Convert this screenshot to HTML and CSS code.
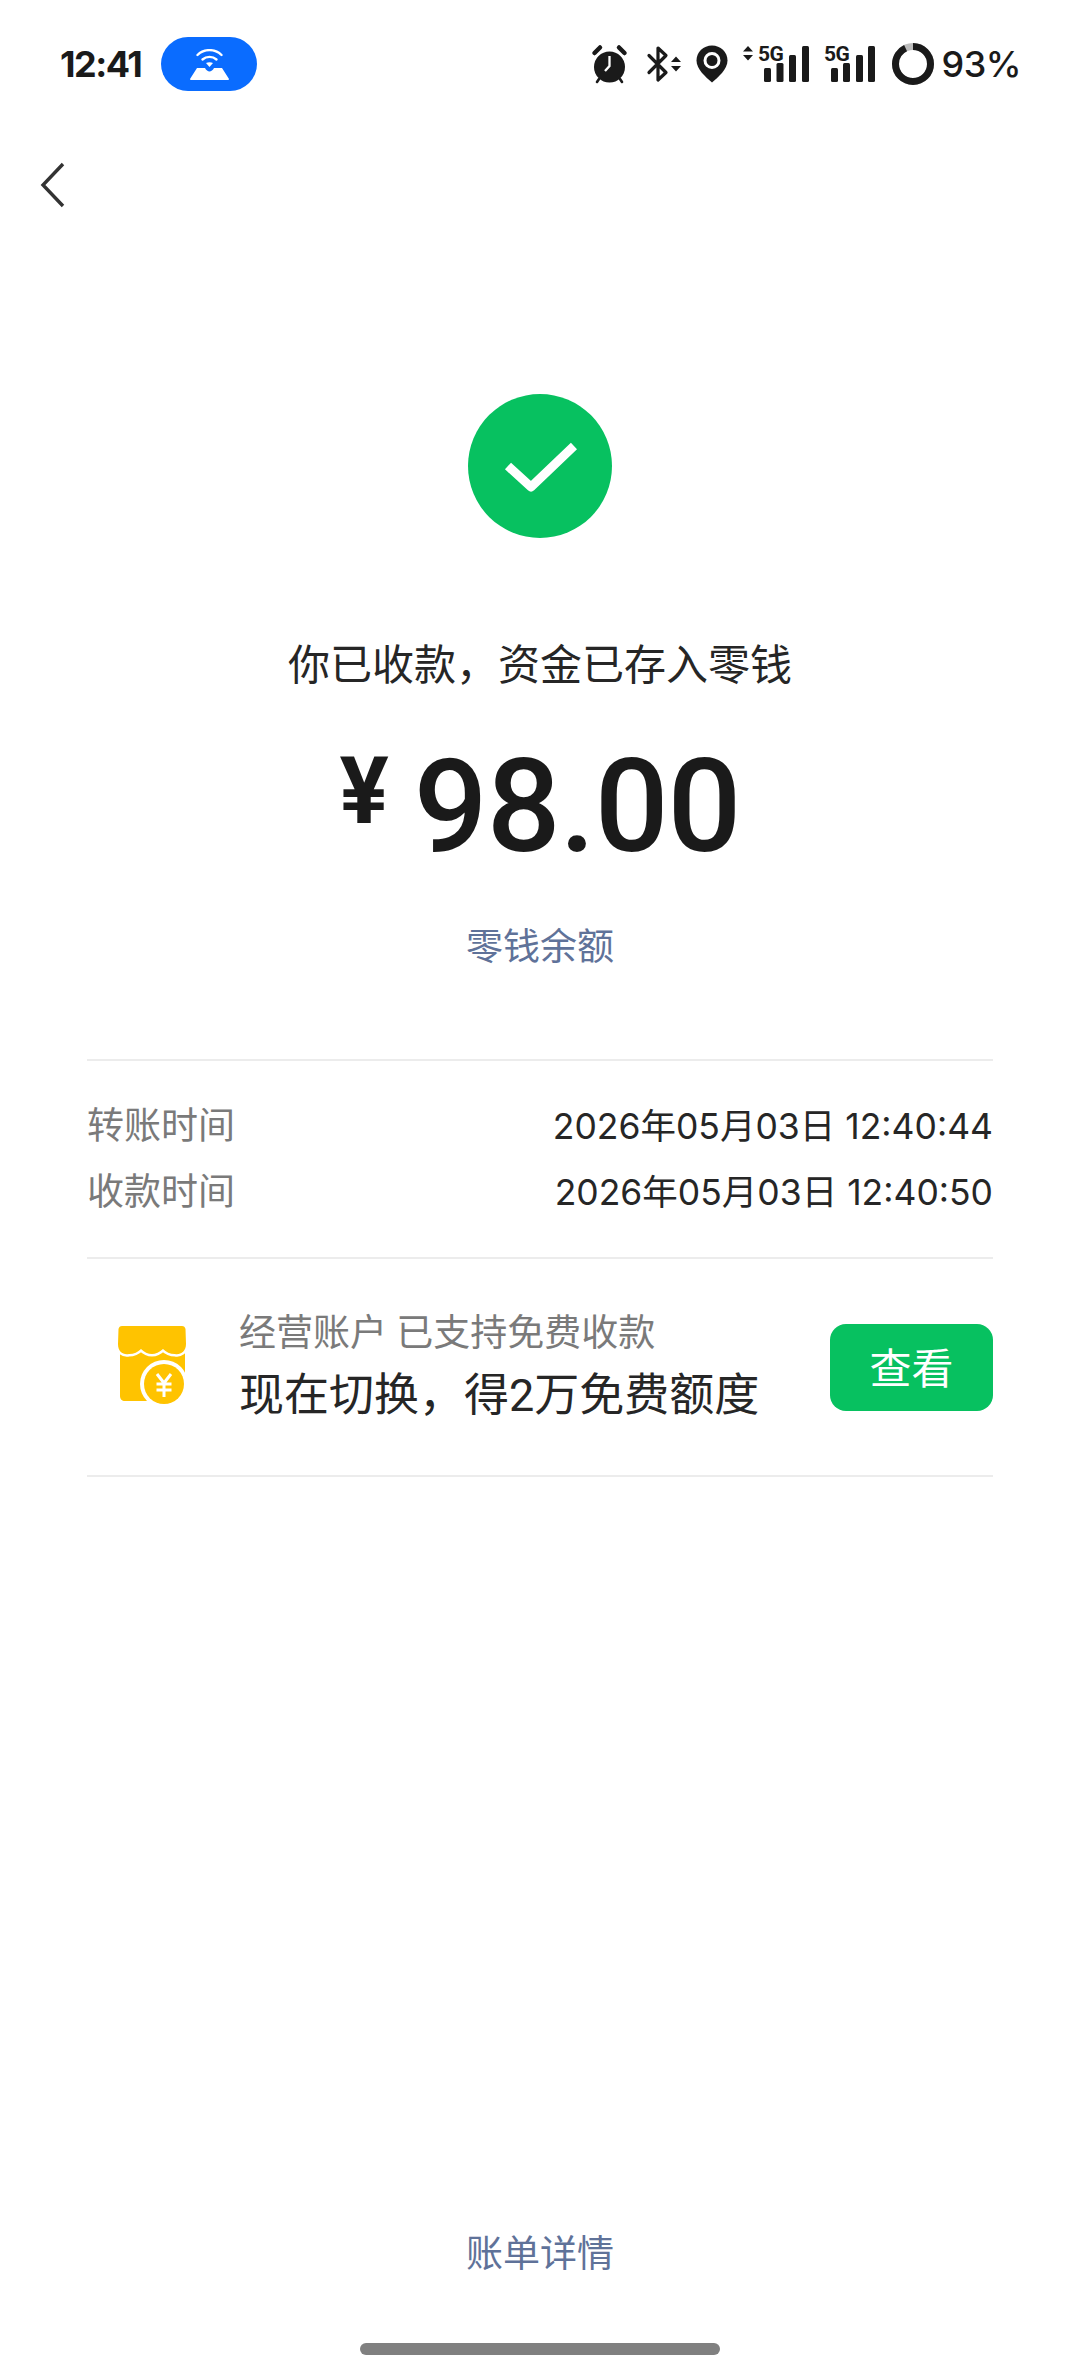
FILE: index.html
```html
<!DOCTYPE html>
<html lang="zh-CN">
<head>
    <meta charset="UTF-8">
    <meta name="viewport" content="width=device-width, initial-scale=1.0">
    <title>收款成功</title>
    <link rel="stylesheet" href="styles.css">
</head>
<body>
    <div class="page">
        <div class="status-bar">
            <div class="status-left">
                <span class="clock">12:41</span>
                <span class="hotspot-pill">
                    <svg width="39" height="31" viewBox="0 0 39 31">
                        <path d="M7.500 6C14 -0.500 25 -0.500 31.500 6" fill="none" stroke="#fff" stroke-width="2.400" stroke-linecap="round"/>
                        <path d="M12.500 10.500C16.500 7 22.500 7 26.500 10.500" fill="none" stroke="#fff" stroke-width="2.400" stroke-linecap="round"/>
                        <path d="M16 14C18 13 21 13 23 14L19.500 18Z" fill="#fff"/>
                        <path d="M7 19H15C16 21 18 22.500 19.500 22.500C21 22.500 23 21 24 19H32L39 30C39 30.500 38.500 31 38 31H1C0.500 31 0 30.500 0 30Z" fill="#fff"/>
                    </svg>
                </span>
            </div>
            <div class="status-right">
                <svg class="icon-alarm" width="35" height="38" viewBox="0 0 35 38">
                    <path d="M2.500 8L8 2.500M32.500 8L27 2.500" fill="none" stroke="#1a1a1a" stroke-width="4.500" stroke-linecap="round"/>
                    <circle cx="17.500" cy="22" r="15.500" fill="#1a1a1a"/>
                    <path d="M7 34L5 37M28 34L30 37" stroke="#1a1a1a" stroke-width="2.600" stroke-linecap="round"/>
                    <path d="M17.500 11V21L13 26" fill="none" stroke="#fff" stroke-width="2.300"/>
                </svg>
                <svg class="icon-bt" width="34" height="38" viewBox="0 0 34 38">
                    <path d="M2 10.500L19 27.500L11 35V3L19 10.500L2 27.500" fill="none" stroke="#1a1a1a" stroke-width="3.200" stroke-linecap="round" stroke-linejoin="round"/>
                    <path d="M24 17L29 11.500L34 17Z M24 21L29 26.500L34 21Z" fill="#1a1a1a"/>
                </svg>
                <svg class="icon-pin" width="32" height="38" viewBox="0 0 32 38">
                    <path d="M16 0.500C7.500 0.500 0.500 7 0.500 15.500C0.500 24 9.500 32 16 37.500C22.500 32 31.500 24 31.500 15.500C31.500 7 24.500 0.500 16 0.500Z" fill="#1a1a1a"/>
                    <circle cx="16" cy="15.500" r="7" fill="none" stroke="#fff" stroke-width="3"/>
                </svg>
                <svg class="icon-signal" width="66" height="38" viewBox="0 0 66 38">
                    <path d="M0 6.500L5 1L10 6.500Z M0 10L5 15.500L10 10Z" fill="#1a1a1a"/>
                    <text x="15" y="16" class="signal-text">5G</text>
                    <rect x="21" y="23" width="7" height="14" rx="1.500" fill="#1a1a1a"/>
                    <rect x="33.500" y="18" width="7" height="19" rx="1.500" fill="#1a1a1a"/>
                    <rect x="46" y="10" width="7" height="27" rx="1.500" fill="#1a1a1a"/>
                    <rect x="59" y="1" width="7" height="36" rx="1.500" fill="#1a1a1a"/>
                </svg>
                <svg class="icon-signal" width="51" height="38" viewBox="0 0 51 38">
                    <text x="0" y="16" class="signal-text">5G</text>
                    <rect x="7" y="23" width="7" height="14" rx="1.500" fill="#1a1a1a"/>
                    <rect x="19" y="18" width="7" height="19" rx="1.500" fill="#1a1a1a"/>
                    <rect x="32" y="10" width="7" height="27" rx="1.500" fill="#1a1a1a"/>
                    <rect x="44" y="1" width="7" height="36" rx="1.500" fill="#1a1a1a"/>
                </svg>
                <svg class="icon-battery" width="42" height="42" viewBox="0 0 42 42">
                    <circle cx="21" cy="21" r="17.500" fill="none" stroke="#bdbdbd" stroke-width="7"/>
                    <circle cx="21" cy="21" r="17.500" fill="none" stroke="#1a1a1a" stroke-width="7" pathLength="100" stroke-dasharray="93 7" transform="rotate(-90 21 21)"/>
                </svg>
                <span class="battery-text">93%</span>
            </div>
        </div>

        <div class="nav-bar">
            <svg width="26" height="46" viewBox="0 0 26 46">
                <path d="M23 2L3 23L23 44" fill="none" stroke="#333" stroke-width="3.400"/>
            </svg>
        </div>

        <div class="result">
            <div class="check-circle">
                <svg width="74" height="56" viewBox="0 0 74 56">
                    <path d="M5 28L28 49L71 8" fill="none" stroke="#fff" stroke-width="9" stroke-linejoin="round"/>
                </svg>
            </div>
            <div class="result-title">你已收款，资金已存入零钱</div>
            <div class="amount"><span class="currency">¥</span>98.00</div>
            <div class="link-text">零钱余额</div>
        </div>

        <div class="details">
            <div class="times">
                <div class="time-row">
                    <span class="time-label">转账时间</span>
                    <span class="time-value">2026年05月03日 12:40:44</span>
                </div>
                <div class="time-row">
                    <span class="time-label">收款时间</span>
                    <span class="time-value">2026年05月03日 12:40:50</span>
                </div>
            </div>
            <div class="promo">
                <svg class="promo-icon" width="68" height="78" viewBox="0 0 68 78">
                    <path d="M2 20H67V50H35V75H7C4 75 2 73 2 70Z" fill="#ffc300"/>
                    <path d="M4 0H64C66 0 67 1 67.500 3L68 18C68 26 62 29 57 28C52 28 48 26 45 23C42 26 37 28 34 28C30 28 26 26 23 23C20 26 16 28 11 28C5 29 0 26 0 18L0.500 3C1 1 2 0 4 0Z" fill="#ffc300" stroke="#fff" stroke-width="5" paint-order="stroke"/>
                    <circle cx="46" cy="58" r="24" fill="#fff"/>
                    <circle cx="46" cy="58" r="20" fill="#ffc300"/>
                    <path d="M39 48L46 57L53 48M38.500 58H53.500M38.500 64H53.500M46 57V71" fill="none" stroke="#fff" stroke-width="3"/>
                </svg>
                <div class="promo-text">
                    <div class="promo-sub">经营账户 已支持免费收款</div>
                    <div class="promo-main">现在切换，得2万免费额度</div>
                </div>
                <button class="promo-btn">查看</button>
            </div>
        </div>

        <div class="footer">
            <div class="link-text">账单详情</div>
            <div class="home-bar"></div>
        </div>
    </div>
</body>
</html>
```

FILE: styles.css
```css
body {
    margin: 0;
    background-color: #fff;
    color: #1a1a1a;
    font-family: "Roboto", "Noto Sans CJK SC", sans-serif;
}
.page {
    display: flex;
    flex-direction: column;
    width: 1080px;
    height: 2376px;
    overflow: hidden;
}
.status-bar {
    display: flex;
    justify-content: space-between;
    align-items: center;
    height: 128px;
    padding: 0 59px 0 60px;
    box-sizing: border-box;
}
.status-left {
    display: flex;
    align-items: center;
    gap: 20px;
}
.clock {
    font-family: "Inter", sans-serif;
    font-size: 36px;
    font-weight: 700;
    letter-spacing: -1.5px;
}
.hotspot-pill {
    display: flex;
    justify-content: center;
    align-items: center;
    width: 96px;
    height: 54px;
    background-color: #0a6cff;
    border-radius: 27px;
}
.status-right {
    display: flex;
    align-items: center;
    gap: 15px;
}
.status-right svg {
    overflow: visible;
}
.signal-text {
    font-family: "Roboto", sans-serif;
    font-size: 21px;
    font-weight: 700;
    letter-spacing: -0.5px;
    fill: #1a1a1a;
}
.icon-bt {
    margin-left: 5px;
}
.icon-battery {
    margin-left: 2px;
    margin-right: -7px;
}
.battery-text {
    font-family: "Inter", sans-serif;
    font-size: 36px;
    font-weight: 500;
    letter-spacing: -0.5px;
}
.nav-bar {
    height: 130px;
    padding: 34px 0 0 40px;
    box-sizing: border-box;
}
.result {
    display: flex;
    flex-direction: column;
    align-items: center;
    margin-top: 136px;
}
.check-circle {
    display: flex;
    justify-content: center;
    align-items: center;
    width: 144px;
    height: 144px;
    background-color: #07c160;
    border-radius: 50%;
}
.result-title {
    margin-top: 98px;
    font-size: 42px;
    line-height: 60px;
    color: #262626;
}
.amount {
    display: flex;
    align-items: flex-start;
    margin-top: 36px;
    font-size: 130px;
    font-weight: 500;
    letter-spacing: -1px;
    line-height: 150px;
}
.currency {
    margin-right: 26px;
    font-size: 92px;
    font-weight: 700;
    line-height: 120px;
}
.link-text {
    font-size: 37px;
    line-height: 50px;
    color: #5f7299;
}
.result .link-text {
    margin-top: 41px;
}
.details {
    margin: 86px 87px 0;
    border-top: 2px solid #ececec;
}
.times {
    padding: 29px 0 35px;
    border-bottom: 2px solid #ececec;
}
.time-row {
    display: flex;
    justify-content: space-between;
    align-items: center;
    height: 66px;
}
.time-label {
    font-size: 37px;
    color: #7a7a7a;
}
.time-value {
    font-family: "Inter", "Noto Sans CJK SC", sans-serif;
    font-size: 35.500px;
    color: #262626;
}
.promo {
    display: flex;
    align-items: center;
    height: 216px;
    border-bottom: 2px solid #ececec;
}
.promo-icon {
    margin: 0 0 5px 31px;
    flex-shrink: 0;
}
.promo-text {
    margin-left: 53px;
}
.promo-sub {
    font-size: 37px;
    line-height: 50px;
    color: #7a7a7a;
}
.promo-main {
    margin-top: 7px;
    font-size: 45px;
    line-height: 60px;
    color: #262626;
}
.promo-btn {
    margin-left: auto;
    width: 163px;
    height: 87px;
    padding: 0 0 3px;
    background-color: #07c160;
    color: #fff;
    border: none;
    border-radius: 16px;
    font-family: "Noto Sans CJK SC", sans-serif;
    font-size: 42px;
}
.footer {
    display: flex;
    flex-direction: column;
    align-items: center;
    margin-top: auto;
    padding-bottom: 21px;
}
.home-bar {
    width: 360px;
    height: 12px;
    margin-top: 63px;
    background-color: #808080;
    border-radius: 6px;
}
```
